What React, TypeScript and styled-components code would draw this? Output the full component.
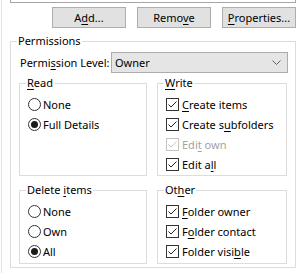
import React from "react";
import styled, { createGlobalStyle } from "styled-components";

const GlobalStyle = createGlobalStyle`
  html, body {
    margin: 0;
    padding: 0;
    background: #ffffff;
  }
  body {
    font-family: "Noto Sans", "Segoe UI", Arial, sans-serif;
    font-size: 11px;
    color: #000000;
    white-space: nowrap;
  }
`;

const Frame = styled.div`
  width: 299px;
  height: 273px;
  margin-left: 1px;
  border-left: 1px solid #e2e2e2;
  box-sizing: border-box;
  overflow: hidden;
`;

const ListBox = styled.div`
  width: 286px;
  height: 3px;
  margin-left: 8px;
  border: 1px solid #a6a6a6;
  border-top: none;
  box-sizing: border-box;
  background: #ffffff;
`;

const ButtonRow = styled.div`
  display: flex;
  justify-content: flex-end;
  gap: 11px;
  margin-top: 4px;
  padding-right: 4px;
`;

const Button = styled.button`
  width: 74px;
  height: 21px;
  padding: 0;
  border: 1px solid #adadad;
  background: #e1e1e1;
  font: inherit;
  color: #000;
  line-height: 17px;
`;

const Key = styled.u`
  text-decoration-thickness: 1px;
  text-underline-offset: 2px;
`;

const Group = styled.fieldset<{ $pad?: number }>`
  margin: 0;
  min-width: 0;
  border: 1px solid #dcdcdc;
  padding: 0 0 0 ${(p) => p.$pad ?? 8}px;
  box-sizing: border-box;
`;

const Legend = styled.legend<{ $shift?: number }>`
  padding: 0 1px;
  margin-left: ${(p) => p.$shift ?? -2}px;
  line-height: 16px;
`;

const Permissions = styled(Group)`
  margin: 5px 0 0 8px;
  width: 286px;
  height: 235px;
  padding-right: 7px;
  padding-bottom: 3px;
`;

const LevelRow = styled.div`
  display: flex;
  align-items: center;
  justify-content: space-between;
  margin-top: 3px;
  height: 21px;
`;

const Select = styled.div`
  width: 177px;
  height: 21px;
  box-sizing: border-box;
  border: 1px solid #acacac;
  background: #e5e5e5;
  display: flex;
  align-items: center;
  justify-content: space-between;
  padding: 0 6px 0 3px;
`;

const Grid = styled.div`
  display: grid;
  grid-template-columns: 128px 130px;
  grid-template-rows: 101px 82px;
  column-gap: 10px;
  row-gap: 6px;
  margin: 2px 0 0 -1px;
`;

const Items = styled.div`
  display: flex;
  flex-direction: column;
  padding-top: 3px;
`;

const Item = styled.label<{ $disabled?: boolean }>`
  display: flex;
  align-items: center;
  height: 20px;
  gap: 2px;
  color: ${(p) => (p.$disabled ? "#a3a3a3" : "#000")};
`;

const Radio = styled.span<{ $on?: boolean }>`
  width: 13px;
  height: 13px;
  box-sizing: border-box;
  border: 1px solid #333;
  border-radius: 50%;
  background: #fff;
  display: flex;
  align-items: center;
  justify-content: center;
  flex: none;

  &::after {
    content: "";
    width: 7px;
    height: 7px;
    border-radius: 50%;
    background: ${(p) => (p.$on ? "#1a1a1a" : "transparent")};
  }
`;

const Box = styled.span<{ $disabled?: boolean }>`
  width: 13px;
  height: 13px;
  box-sizing: border-box;
  border: 1px solid ${(p) => (p.$disabled ? "#c4c4c4" : "#333")};
  background: #fff;
  display: flex;
  align-items: center;
  justify-content: center;
  flex: none;
  margin-right: 1px;
`;

const Check = ({ disabled }: { disabled?: boolean }) => (
  <Box $disabled={disabled}>
    <svg width="11" height="11" viewBox="0 0 11 11">
      <path
        d="M1.5 5.5 L4 8 L9.5 2.5"
        fill="none"
        stroke={disabled ? "#c4c4c4" : "#222"}
        strokeWidth="1"
      />
    </svg>
  </Box>
);

const Chevron = () => (
  <svg width="9" height="5" viewBox="0 0 9 5">
    <path d="M0.5 0.5 L4.5 4.5 L8.5 0.5" fill="none" stroke="#606060" strokeWidth="1" />
  </svg>
);

export default function App() {
  return (
    <>
      <GlobalStyle />
      <Frame>
        <ListBox />
        <ButtonRow>
          <Button>
            A<Key>d</Key>d...
          </Button>
          <Button>
            Remo<Key>v</Key>e
          </Button>
          <Button>
            <Key>P</Key>roperties...
          </Button>
        </ButtonRow>
        <Permissions $pad={9}>
          <Legend $shift={-3}>Permissions</Legend>
          <LevelRow>
            <span>
              Permi<Key>s</Key>sion Level:
            </span>
            <Select>
              <span>Owner</span>
              <Chevron />
            </Select>
          </LevelRow>
          <Grid>
            <Group>
              <Legend>
                <Key>R</Key>ead
              </Legend>
              <Items>
                <Item>
                  <Radio />
                  <span>None</span>
                </Item>
                <Item>
                  <Radio $on />
                  <span>Full Details</span>
                </Item>
              </Items>
            </Group>
            <Group>
              <Legend>
                <Key>W</Key>rite
              </Legend>
              <Items>
                <Item>
                  <Check />
                  <span>
                    <Key>C</Key>reate items
                  </span>
                </Item>
                <Item>
                  <Check />
                  <span>
                    Create s<Key>u</Key>bfolders
                  </span>
                </Item>
                <Item $disabled>
                  <Check disabled />
                  <span>
                    Edi<Key>t</Key> own
                  </span>
                </Item>
                <Item>
                  <Check />
                  <span>
                    Edit a<Key>l</Key>l
                  </span>
                </Item>
              </Items>
            </Group>
            <Group>
              <Legend>
                Delete <Key>i</Key>tems
              </Legend>
              <Items>
                <Item>
                  <Radio />
                  <span>None</span>
                </Item>
                <Item>
                  <Radio />
                  <span>Own</span>
                </Item>
                <Item>
                  <Radio $on />
                  <span>All</span>
                </Item>
              </Items>
            </Group>
            <Group>
              <Legend>
                Ot<Key>h</Key>er
              </Legend>
              <Items>
                <Item>
                  <Check />
                  <span>
                    <Key>F</Key>older owner
                  </span>
                </Item>
                <Item>
                  <Check />
                  <span>
                    F<Key>o</Key>lder contact
                  </span>
                </Item>
                <Item>
                  <Check />
                  <span>
                    Folder visi<Key>b</Key>le
                  </span>
                </Item>
              </Items>
            </Group>
          </Grid>
        </Permissions>
      </Frame>
    </>
  );
}
